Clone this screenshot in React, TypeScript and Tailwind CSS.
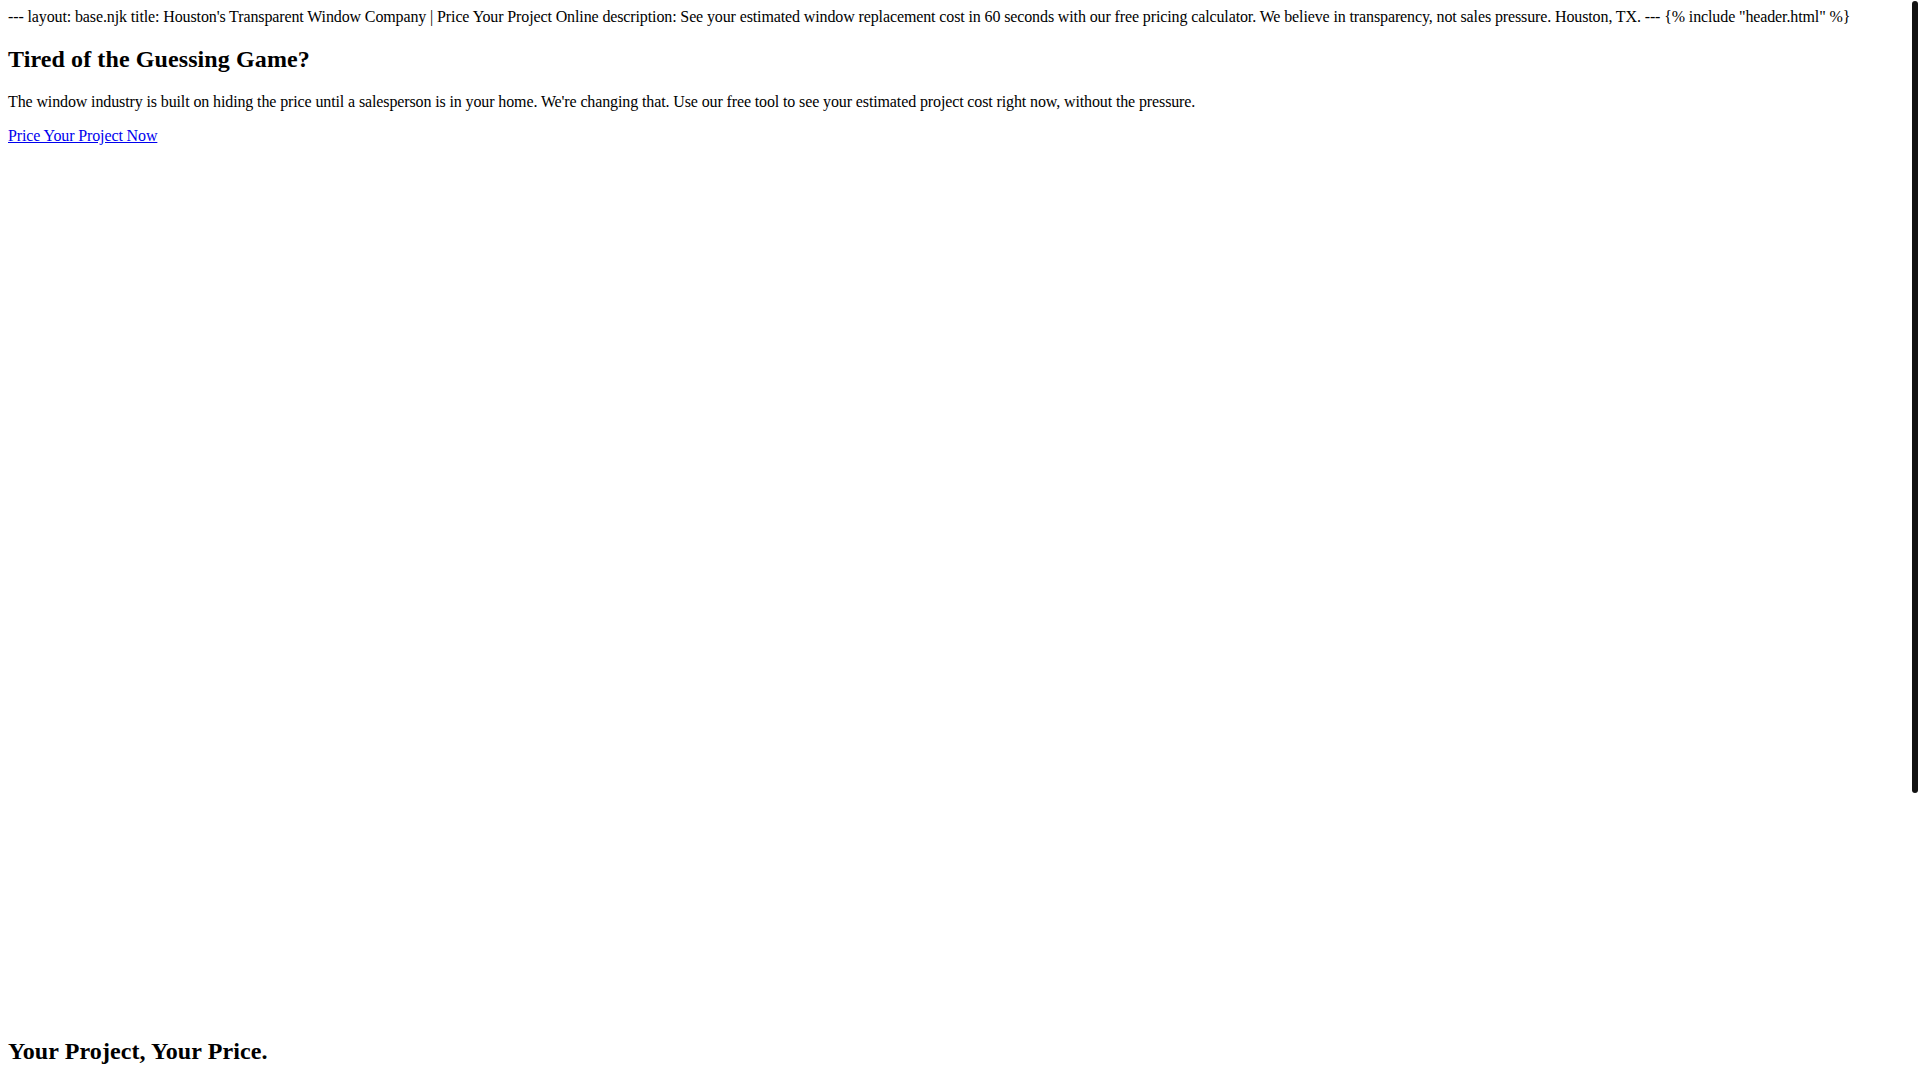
export default function App() {
  return (
    <div className="relative bg-white">
      <div className="min-h-[1475px] p-2 font-['Liberation_Serif','Times_New_Roman',serif] text-base leading-[normal] tracking-[-0.12px] text-black">
        <div>
          --- layout: base.njk title: Houston's Transparent Window Company | Price Your Project Online
          description: See your estimated window replacement cost in 60 seconds with our free pricing
          calculator. We believe in transparency, not sales pressure. Houston, TX. --- {'{'}% include
          "header.html" %{'}'}
        </div>
        <section>
          <h2 className="my-[0.83em] text-2xl font-bold leading-[normal] tracking-[0.1px]">
            Tired of the Guessing Game?
          </h2>
          <p className="my-4">
            The window industry is built on hiding the price until a salesperson is in your home.
            We're changing that. Use our free tool to see your estimated project cost right now,
            without the pressure.
          </p>
          <p className="my-4">
            <a href="#pricing" className="text-[#0000ee] underline">
              Price Your Project Now
            </a>
          </p>
        </section>
        <div className="h-[857px]" />
        <section>
          <h2 className="my-[0.83em] text-2xl font-bold leading-[normal] tracking-[0.1px]">
            Your Project, Your Price.
          </h2>
        </section>
      </div>
      {/* overlay scrollbar thumb */}
      <div aria-hidden className="fixed right-[2px] top-[1px] h-[792px] w-[6px] rounded-full bg-[#121212]" />
    </div>
  );
}
